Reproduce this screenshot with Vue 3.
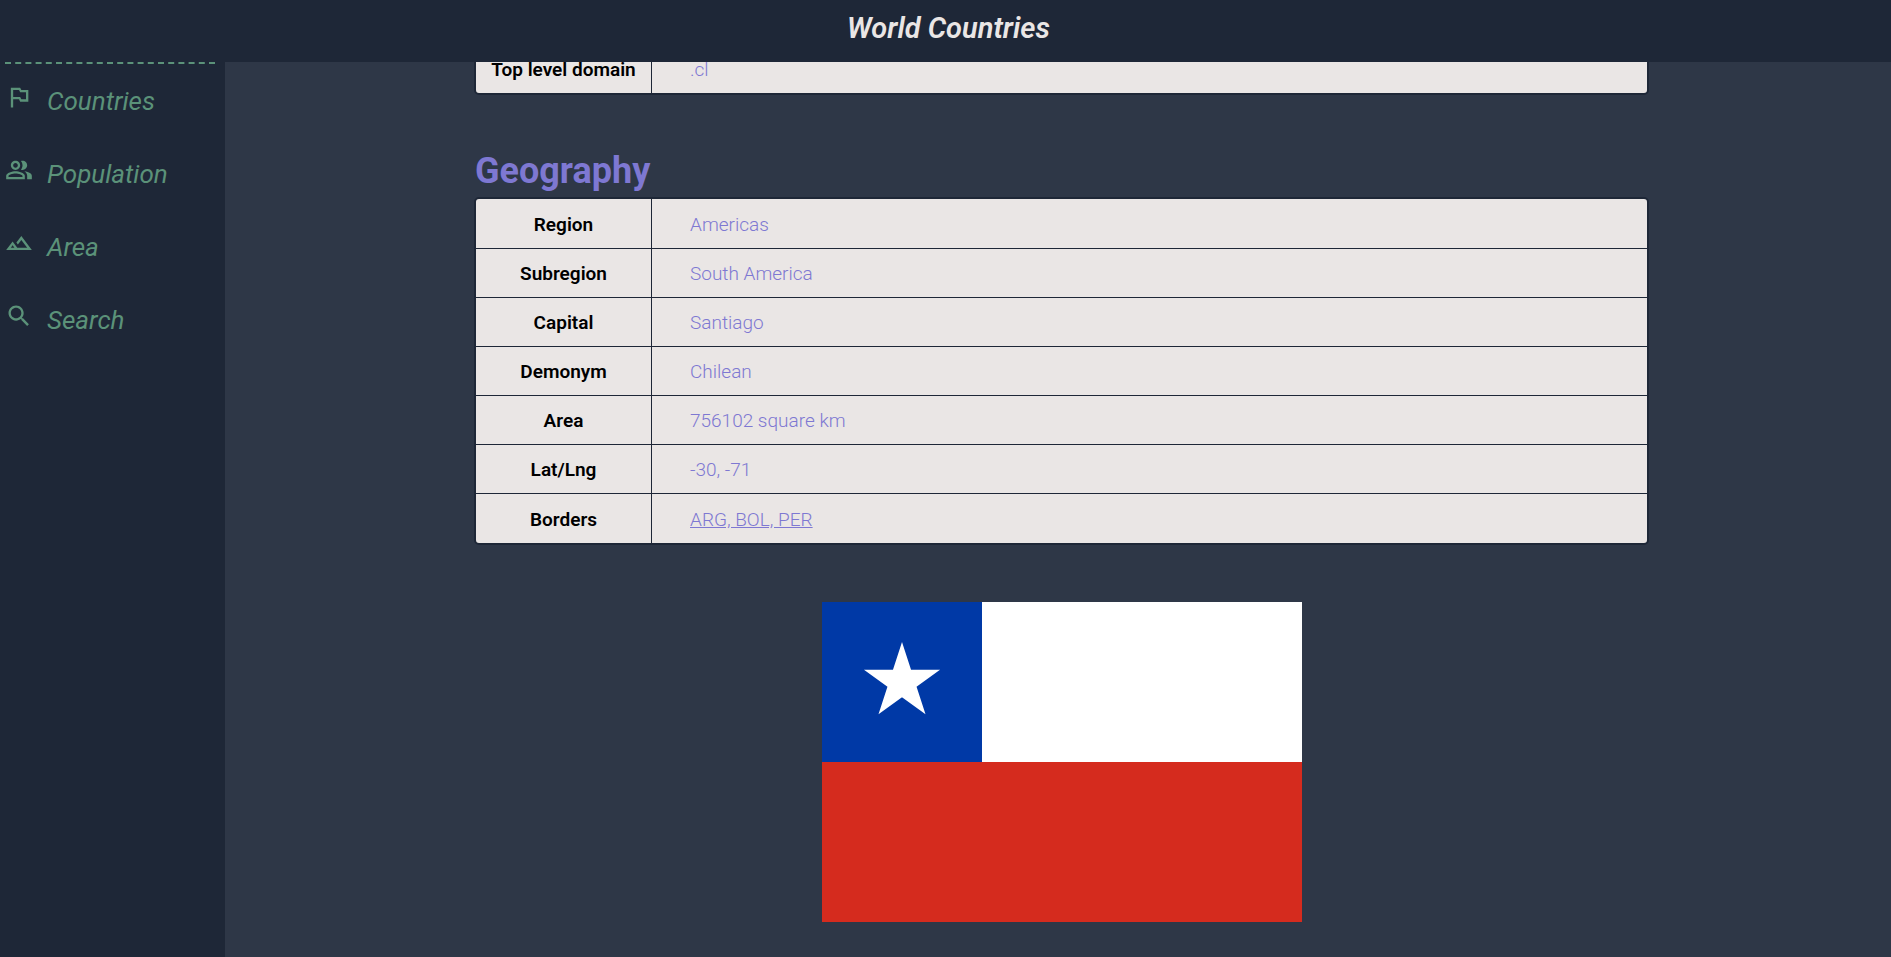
<script setup>
const links = [
  {
    label: 'Countries',
    paths: ['M14 6l-1-2H5v17h2v-7h5l1 2h7V6h-6zm4 8h-4l-1-2H7V6h5l1 2h5v6z'],
  },
  {
    label: 'Population',
    paths: [
      'M16.67 13.13C18.04 14.06 19 15.32 19 17v3h4v-3c0-2.18-3.57-3.47-6.33-3.87z',
      'M15 12c2.21 0 4-1.79 4-4s-1.79-4-4-4c-.47 0-.91.1-1.33.24C14.5 5.27 15 6.58 15 8s-.5 2.73-1.33 3.76c.42.14.86.24 1.33.24z',
      'M9 12c2.21 0 4-1.79 4-4s-1.79-4-4-4-4 1.79-4 4 1.79 4 4 4zm0-6c1.1 0 2 .9 2 2s-.9 2-2 2-2-.9-2-2 .9-2 2-2z',
      'M9 13c-2.67 0-8 1.34-8 4v3h16v-3c0-2.66-5.33-4-8-4zm6 5H3v-.99C3.2 16.29 6.3 15 9 15s5.8 1.29 6 2v1z',
    ],
  },
  {
    label: 'Area',
    paths: [
      'M14 6l-4.22 5.63 1.25 1.67L14 9.33 19 16h-8.46l-4.01-5.37L1 18h22L14 6zM5 16l1.52-2.03L8.04 16H5z',
    ],
  },
  {
    label: 'Search',
    paths: [
      'M15.5 14h-.79l-.28-.27C15.41 12.59 16 11.11 16 9.5 16 5.91 13.09 3 9.5 3S3 5.91 3 9.5 5.91 16 9.5 16c1.61 0 3.09-.59 4.23-1.57l.27.28v.79l5 4.99L20.49 19l-4.99-5zm-6 0C7.01 14 5 11.99 5 9.5S7.01 5 9.5 5 14 7.01 14 9.5 11.99 14 9.5 14z',
    ],
  },
]

const general = [{ label: 'Top level domain', value: '.cl' }]

const geography = [
  { label: 'Region', value: 'Americas' },
  { label: 'Subregion', value: 'South America' },
  { label: 'Capital', value: 'Santiago' },
  { label: 'Demonym', value: 'Chilean' },
  { label: 'Area', value: '756102 square km' },
  { label: 'Lat/Lng', value: '-30, -71' },
  { label: 'Borders', value: 'ARG, BOL, PER', link: true },
]
</script>

<template>
  <div class="app">
    <header class="topbar">
      <h1>World Countries</h1>
    </header>
    <div class="body">
      <nav class="sidebar">
        <div class="divider"></div>
        <a v-for="item in links" :key="item.label" href="#" class="nav-link">
          <svg viewBox="0 0 24 24" aria-hidden="true">
            <path v-for="d in item.paths" :key="d" :d="d" fill-rule="evenodd" />
          </svg>
          <span>{{ item.label }}</span>
        </a>
      </nav>
      <main class="main">
        <div class="content">
          <div class="card">
            <table>
              <tbody>
                <tr v-for="row in general" :key="row.label">
                  <th scope="row">{{ row.label }}</th>
                  <td>{{ row.value }}</td>
                </tr>
              </tbody>
            </table>
          </div>
          <h2>Geography</h2>
          <div class="card">
            <table>
              <tbody>
                <tr v-for="row in geography" :key="row.label">
                  <th scope="row">{{ row.label }}</th>
                  <td>
                    <a v-if="row.link" href="#">{{ row.value }}</a>
                    <template v-else>{{ row.value }}</template>
                  </td>
                </tr>
              </tbody>
            </table>
          </div>
          <svg class="flag" viewBox="0 0 480 320" role="img" aria-label="Flag of Chile">
            <rect width="480" height="160" fill="#fff" />
            <rect width="160" height="160" fill="#0039a6" />
            <rect y="160" width="480" height="160" fill="#d52b1e" />
            <polygon
              fill="#fff"
              points="80,40 103.51,112.36 41.96,67.64 118.04,67.64 56.49,112.36"
            />
          </svg>
        </div>
      </main>
    </div>
  </div>
</template>

<style>
body {
  background: #2e3747;
}
</style>

<style scoped>
.app {
  display: flex;
  flex-direction: column;
  height: 100vh;
  overflow: hidden;
  background: #2e3747;
  font-family: Roboto, 'Open Sans', sans-serif;
}

.topbar {
  display: flex;
  flex: none;
  align-items: center;
  justify-content: center;
  height: 62px;
  padding-bottom: 6px;
  box-sizing: border-box;
  background: #1e2737;
}

h1 {
  margin: 0;
  padding-left: 6px;
  color: #eae6e5;
  font-size: 29px;
  font-style: italic;
  font-weight: 600;
  line-height: 40px;
}

.body {
  display: flex;
  flex: 1;
  min-height: 0;
}

.sidebar {
  flex: none;
  width: 225px;
  background: #1e2737;
}

.divider {
  margin: 0 10px 0 5px;
  border-top: 2px dashed #5b9279;
}

.nav-link {
  display: flex;
  align-items: center;
  gap: 14px;
  height: 73px;
  padding-left: 5px;
  color: #5b9279;
  font-size: 26px;
  font-style: italic;
  font-weight: 400;
  line-height: 36px;
  text-decoration: none;
}

.nav-link svg {
  width: 28px;
  height: 28px;
  margin-bottom: 8px;
  fill: currentColor;
}

.main {
  flex: 1;
  min-width: 0;
  overflow: hidden;
}

.content {
  display: flex;
  flex-direction: column;
  width: 1175px;
  max-width: 90%;
  margin: -20px auto 0;
  padding-left: 7px;
}

.card {
  overflow: hidden;
  border: 2px solid #1e2737;
  border-radius: 5px;
  background: #eae6e5;
}

table {
  width: 100%;
  border-collapse: collapse;
  font-size: 19px;
  line-height: 24px;
}

th,
td {
  height: 46px;
  padding: 2px 0 0;
}

tr:first-child > *,
tr:last-child > * {
  height: 47px;
}

tr + tr > * {
  border-top: 1px solid #1e2737;
}

th {
  width: 175px;
  color: #000;
  font-weight: 600;
  text-align: center;
}

td {
  padding-left: 38px;
  border-left: 1px solid #1e2737;
  color: #7e78d2;
  font-weight: 300;
}

td a {
  color: inherit;
}

h2 {
  margin: 52px 0 2px;
  padding-left: 1px;
  color: #7e78d2;
  font-size: 36px;
  font-weight: 700;
  line-height: 48px;
}

.flag {
  width: 480px;
  max-width: 100%;
  margin: 57px auto 0;
}
</style>
